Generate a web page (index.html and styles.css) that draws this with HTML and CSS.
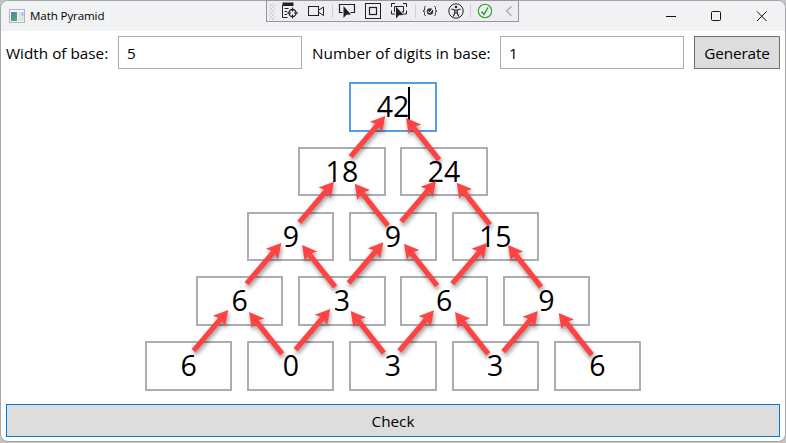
FILE: index.html
```html
<!DOCTYPE html>
<html lang="en">
<head>
<meta charset="utf-8">
<title>Math Pyramid</title>
<link rel="stylesheet" href="styles.css">
</head>
<body>
<div class="window">
  <header class="titlebar">
    <svg class="app-icon" width="16" height="14" viewBox="0 0 16 14">
      <defs><linearGradient id="pane" x2="1" y2="1"><stop offset="0" stop-color="#4d7fa8"/><stop offset="1" stop-color="#58ab7b"/></linearGradient></defs>
      <rect x=".5" y=".5" width="15" height="13" fill="#f5f5f5" stroke="#b2b4b8"/>
      <rect x="2" y="3" width="6" height="9" fill="url(#pane)"/>
      <rect x="9" y="3" width="3" height="9" fill="#e0e3e7"/>
      <rect x="12.500" y="3" width="2" height="4" fill="#9cbfe0"/><rect x="12.500" y="7" width="2" height="5" fill="#cfe3d8"/>
    </svg>
    <span class="title">Math Pyramid</span>
    <svg class="controls" width="138" height="30" viewBox="0 0 138 30" fill="none" stroke="#111">
      <path d="M19 15.500h10"/>
      <rect x="64.500" y="10.500" width="9" height="9" rx="1"/>
      <path d="M110 10.500l9.500 9.500M119.500 10.500L110 20"/>
    </svg>
  </header>

  <div class="form">
    <label class="label-width" for="width">Width of base:</label>
    <div class="input" id="width">5</div>
    <label class="label-digits" for="digits">Number of digits in base:</label>
    <div class="input" id="digits">1</div>
    <button class="generate">Generate</button>
  </div>

  <main class="pyramid">
    <div class="row"><div class="cell focused"><span>42</span></div></div>
    <div class="row"><div class="cell">18</div><div class="cell">24</div></div>
    <div class="row"><div class="cell">9</div><div class="cell">9</div><div class="cell">15</div></div>
    <div class="row"><div class="cell">6</div><div class="cell">3</div><div class="cell">6</div><div class="cell">9</div></div>
    <div class="row"><div class="cell">6</div><div class="cell">0</div><div class="cell">3</div><div class="cell">3</div><div class="cell">6</div></div>
  </main>

  <button class="check">Check</button>
</div>

<svg class="arrows" width="786" height="443" viewBox="0 0 786 443">
  <defs>
    <path id="arrow" d="M0 0L-14.500 8L-12.500 2.600L-53.500 2.600V-2.600L-12.500-2.600L-14.500-8Z"/>
    <g id="right"><use href="#arrow" transform="rotate(-49.500)"/></g>
    <g id="left"><use href="#arrow" transform="rotate(-128.300)"/></g>
  </defs>
  <g fill="#ff4343">
    <use href="#right" x="385.300" y="116"/><use href="#left" x="406" y="118"/>
    <use href="#right" x="334" y="181.700"/><use href="#left" x="354.700" y="183.700"/>
    <use href="#right" x="436" y="181"/><use href="#left" x="456.700" y="182.700"/>
    <use href="#right" x="281.300" y="243"/><use href="#left" x="302" y="245"/>
    <use href="#right" x="383.300" y="242.300"/><use href="#left" x="404" y="243.700"/>
    <use href="#right" x="487" y="243"/><use href="#left" x="508" y="245"/>
    <use href="#right" x="228.300" y="310"/><use href="#left" x="249" y="312"/>
    <use href="#right" x="330.300" y="309"/><use href="#left" x="350.700" y="311"/>
    <use href="#right" x="434" y="310.300"/><use href="#left" x="455" y="312"/>
    <use href="#right" x="538" y="311"/><use href="#left" x="558.700" y="313"/>
  </g>
</svg>

<div class="debugbar">
  <i class="grip"></i>
  <svg width="18" height="18" viewBox="0 0 18 18" fill="none" stroke="#222">
    <path d="M1.500 1.500h11M1.500 3h11" stroke-width="2"/><path d="M1.500 3v12.500h5M3.500 6.500h4M3.500 9.500h2.500M3.500 12.500h2.500"/>
    <circle cx="11.500" cy="11" r="3.500" stroke-width="1.300"/><path d="M11.500 5.500v4M11.500 12.500v4M6 11h4M13 11h4"/>
  </svg>
  <svg width="18" height="18" viewBox="0 0 18 18" fill="none" stroke="#222"><rect x="1.500" y="4.500" width="10" height="9"/><path d="M12 8l4.500-3v8.500L12 10.500"/></svg>
  <i class="sep"></i>
  <svg width="18" height="18" viewBox="0 0 18 18" fill="none" stroke="#222"><path d="M4.500 10.500h-3v-8h15v8h-4" stroke-width="1.200"/><path d="M5.500 4v12l3-3.200 4.500-.3z" fill="#222" stroke="none"/></svg>
  <svg width="18" height="18" viewBox="0 0 18 18" fill="none" stroke="#222"><rect x="1.500" y="1.500" width="15" height="15"/><rect x="5.500" y="5.500" width="7" height="7" stroke-width="1.200"/></svg>
  <svg width="18" height="18" viewBox="0 0 18 18" fill="none" stroke="#222"><path d="M1.500 5V1.500H5M13 1.500h3.500V5M16.500 8.500V12H13M1.500 8.500V12H5M4.500 10V4.500h9V10h-2"/><path d="M6 4.500v12l3-3.200 4.500-.3z" fill="#222" stroke="none"/></svg>
  <i class="sep"></i>
  <svg width="18" height="18" viewBox="0 0 18 18" fill="none" stroke="#333"><path d="M5 4.500H4.500q-1 0-1 1v2q0 1.500-1.500 1.500 1.500 0 1.500 1.500v2q0 1 1 1H5M13 4.500h.5q1 0 1 1v2q0 1.500 1.500 1.500-1.500 0-1.500 1.500v2q0 1-1 1H13"/><circle cx="9" cy="9.500" r="3.200" fill="#333" stroke="none"/><path d="M7 9.200l1.500 1.800 3.500-4.500" stroke="#fff"/></svg>
  <svg width="18" height="18" viewBox="0 0 18 18" fill="none" stroke="#222"><circle cx="9" cy="9" r="7.200"/><circle cx="9" cy="5" r="1.300" fill="#222" stroke="none"/><path d="M4.500 7l3 1h3l3-1M7.800 8v3L6.300 14.500M10.200 8v3l1.500 3.500M7.800 11h2.400" stroke-width="1.200"/></svg>
  <i class="sep"></i>
  <svg width="18" height="18" viewBox="0 0 18 18" fill="none" stroke="#2ca02c"><circle cx="9" cy="9" r="6.700" stroke-width="1.100"/><path d="M5.500 9.500l2.500 3 4-7" stroke-width="1.500"/></svg>
  <svg width="18" height="18" viewBox="0 0 18 18" fill="none" stroke="#a8a8ac"><path d="M11.500 4.500L6.500 9l5 4.800" stroke-width="1.200"/></svg>
</div>
</body>
</html>
```
FILE: styles.css
```css
* { box-sizing: border-box; }

body {
  margin: 0;
  width: 786px;
  height: 443px;
  overflow: hidden;
  background: #c4c4c6;
  color: #000;
  font-family: "Open Sans", "Noto Sans", sans-serif;
  font-size: 15.300px;
}

.window {
  display: flex;
  flex-direction: column;
  width: 786px;
  height: 442px;
  overflow: hidden;
  border: 1px solid #a6a6a8;
  border-radius: 8px;
  background: #fff;
}

.titlebar {
  display: flex;
  align-items: center;
  flex: none;
  height: 30px;
  padding-left: 8px;
  background: #f1f2f4;
}

.title {
  margin-left: 5px;
  margin-top: -1px;
  font-size: 11.600px;
  letter-spacing: -0.120px;
}

.controls { margin-left: auto; margin-top: -1px; }

.form {
  display: flex;
  align-items: center;
  height: 33px;
  margin: 5px 5px 0;
  flex: none;
}

.label-width { width: 112px; white-space: nowrap; }
.label-digits { width: 188px; margin-left: 10px; margin-right: -10px; white-space: nowrap; }

.input {
  width: 184px;
  height: 33px;
  padding-left: 8px;
  border: 1px solid #abadb3;
  line-height: 32px;
}

#digits { margin-left: 10px; }

button {
  padding: 1px 0 0;
  border: 1px solid #707070;
  background: #ddd;
  color: #000;
  font: inherit;
}

.generate { width: 86px; height: 33px; margin-left: 10px; padding: 0; letter-spacing: -0.150px; }

.pyramid {
  display: flex;
  flex-direction: column;
  gap: 15.200px;
  flex: none;
  margin-top: 13px;
}

.row {
  display: flex;
  justify-content: center;
  gap: 14.900px;
  height: 49.600px;
}

.cell {
  width: 87.300px;
  border: 2px solid #abadb3;
  font-size: 28.500px;
  line-height: 45px;
  text-align: center;
}

.focused { border-color: #569de5; }

.focused span { position: relative; }

.focused span::after {
  content: "";
  position: absolute;
  right: -1px;
  top: 0;
  width: 2px;
  height: 35px;
  background: #000;
}

.check {
  flex: none;
  height: 33px;
  margin: 13px 5px 0;
  padding-top: 2px;
  border-color: #0078d7;
}

.arrows {
  position: absolute;
  left: 0;
  top: 0;
  filter: drop-shadow(1px 3px 2px rgba(0, 0, 0, 0.400));
}

.debugbar {
  position: absolute;
  left: 266px;
  top: 0;
  display: grid;
  grid-template-columns: 10px 25px 28px 4px 26px 26px 26px 7px 22px 29px 1px 28px 19px;
  align-items: center;
  justify-items: center;
  width: 253px;
  height: 22px;
  border: 1px solid #98989c;
  background: #eeeef2;
}

.grip {
  width: 6px;
  height: 17px;
  background:
    radial-gradient(circle, #aaa 0.500px, transparent 0.800px) 0 0 / 4px 4px,
    radial-gradient(circle, #aaa 0.500px, transparent 0.800px) 2px 2px / 4px 4px;
}

.sep { width: 1px; height: 14px; background: #cccedb; }
```
